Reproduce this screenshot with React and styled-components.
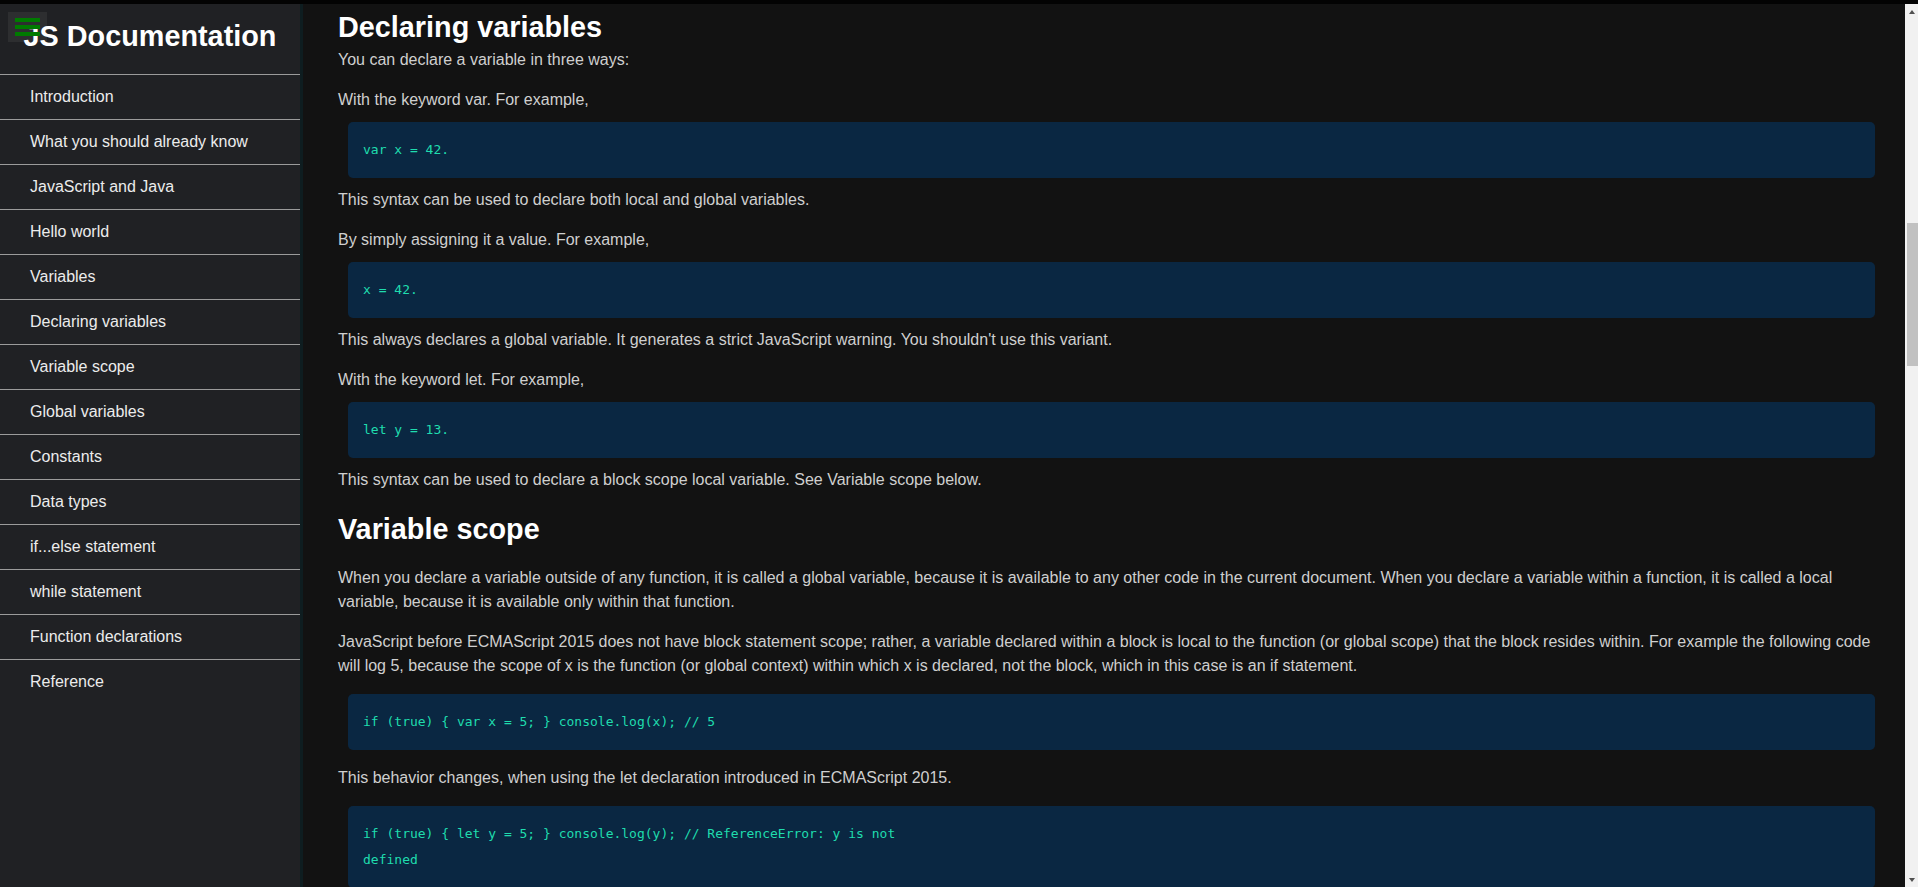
import React, { useLayoutEffect, useRef, useState } from "react"
import styled, { createGlobalStyle } from "styled-components"

const GlobalStyle = createGlobalStyle`
  html, body {
    margin: 0;
    height: 100%;
    overflow: hidden;
  }
  body {
    background: #121212;
    font-family: "Liberation Sans", Arial, sans-serif;
  }
  * {
    box-sizing: border-box;
  }
`

const Page = styled.div`
  display: flex;
  height: 100vh;
  border-top: 4px solid #030303;
`

const NavBar = styled.nav`
  flex: 0 0 303px;
  height: 100%;
  background: #202124;
  border-right: 3px solid #0e1d20;
  overflow: hidden;
`

const NavTitle = styled.header`
  margin: 0;
  padding: 16px 0 22px;
  font-size: 28.8px;
  line-height: 32px;
  font-weight: bold;
  text-align: center;
  color: #ffffff;
`

const NavList = styled.ul`
  list-style: none;
  margin: 0;
  padding: 0;
`

const NavLink = styled.a`
  display: block;
  padding: 10px 30px;
  font-size: 16px;
  line-height: 24px;
  color: #ececec;
  text-decoration: none;
  border-top: 1px solid #9b9b9b;
`

const MenuToggle = styled.button`
  position: fixed;
  top: 12px;
  left: 8px;
  z-index: 10;
  width: 39px;
  height: 30px;
  padding: 6px 7px;
  border: none;
  background: rgba(255, 255, 255, 0.06);
  display: flex;
  flex-direction: column;
  gap: 3.5px;
  cursor: pointer;
`

const Bar = styled.span`
  display: block;
  width: 25px;
  height: 3.5px;
  background: #007a00;
`

const Main = styled.main`
  flex: 1;
  height: 100%;
  overflow-y: scroll;
  background: #121212;
  scrollbar-width: none;

  &::-webkit-scrollbar {
    display: none;
  }
`

const Rail = styled.div`
  flex: 0 0 13px;
  height: 100%;
  display: flex;
  flex-direction: column;
  background: #f1f1f1;
`

const RailButton = styled.div`
  flex: 0 0 15px;
  display: flex;
  align-items: center;
  justify-content: center;

  &::before {
    content: "";
    width: 0;
    height: 0;
    border-left: 3.5px solid transparent;
    border-right: 3.5px solid transparent;
    ${(p) => (p.$down ? "border-top" : "border-bottom")}: 4px solid #505050;
  }
`

const RailTrack = styled.div`
  flex: 1;
  display: flex;
  flex-direction: column;
  align-items: flex-end;
`

const RailThumb = styled.div`
  width: 11px;
  background: #c1c1c1;
`

const Doc = styled.div`
  padding: 45px 20px 85px 35px;
  color: #cfcfcf;
  font-size: 16px;
  line-height: 24px;
`

const Section = styled.section`
  & + & {
    margin-top: 21px;
  }
`

const SectionTitle = styled.header`
  margin: 0 0 ${(p) => (p.$after ?? 21)}px;
  font-size: 28.8px;
  line-height: 32px;
  font-weight: bold;
  color: #ffffff;
`

const Para = styled.p`
  margin: 0;

  & + & {
    margin-top: 16px;
  }
`

const Code = styled.code`
  display: block;
  white-space: pre-line;
  margin: ${(p) => (p.$gap ?? 16)}px 10px;
  padding: 15px;
  border-radius: 5px;
  background: #0a2742;
  color: #1fdcae;
  font-family: "DejaVu Sans Mono", "Liberation Mono", monospace;
  font-size: 13px;
  line-height: 2;
`

const List = styled.ul`
  margin: ${(p) => (p.$nested ? 0 : 16)}px 0;
  padding-left: 40px;
`

const navItems = [
  "Introduction",
  "What you should already know",
  "JavaScript and Java",
  "Hello world",
  "Variables",
  "Declaring variables",
  "Variable scope",
  "Global variables",
  "Constants",
  "Data types",
  "if...else statement",
  "while statement",
  "Function declarations",
  "Reference",
]

const App = () => {
  const mainRef = useRef(null)
  const anchorRef = useRef(null)
  const trackRef = useRef(null)
  const [thumb, setThumb] = useState({ top: 0, height: 0 })

  useLayoutEffect(() => {
    const main = mainRef.current
    const target = anchorRef.current
    main.scrollTop += target.getBoundingClientRect().top - 11

    // the page is photographed scrolled, so the rail shows where we are
    const track = trackRef.current.clientHeight
    const ratio = main.clientHeight / main.scrollHeight
    const height = Math.max(20, track * ratio)
    const top = ((track - height) * main.scrollTop) / (main.scrollHeight - main.clientHeight)
    setThumb({ top, height })
  }, [])

  return (
    <>
      <GlobalStyle />
      <MenuToggle aria-label="menu">
        <Bar />
        <Bar />
        <Bar />
      </MenuToggle>
      <Page>
        <NavBar>
          <NavTitle>JS Documentation</NavTitle>
          <NavList>
            {navItems.map((item) => (
              <li key={item}>
                <NavLink href={"#" + item.replace(/ /g, "_")}>{item}</NavLink>
              </li>
            ))}
          </NavList>
        </NavBar>

        <Main ref={mainRef}>
          <Doc>
            <Section id="Introduction">
              <SectionTitle>Introduction</SectionTitle>
              <Para>
                JavaScript is a cross-platform, object-oriented scripting language. It is a small and lightweight
                language. Inside a host environment (for example, a web browser), JavaScript can be connected to the
                objects of its environment to provide programmatic control over them.
              </Para>
              <Para>
                JavaScript contains a standard library of objects, such as Array, Date, and Math, and a core set of
                language elements such as operators, control structures, and statements. Core JavaScript can be extended
                for a variety of purposes by supplementing it with additional objects; for example:
              </Para>
              <List>
                <li>
                  Client-side JavaScript extends the core language by supplying objects to control a browser and its
                  Document Object Model (DOM). For example, client-side extensions allow an application to place elements
                  on an HTML form and respond to user events such as mouse clicks, form input, and page navigation.
                </li>
                <li>
                  Server-side JavaScript extends the core language by supplying objects relevant to running JavaScript on
                  a server. For example, server-side extensions allow an application to communicate with a database,
                  provide continuity of information from one invocation to another of the application, or perform file
                  manipulations on a server.
                </li>
              </List>
            </Section>

            <Section id="What_you_should_already_know">
              <SectionTitle>What you should already know</SectionTitle>
              <Para>This guide assumes you have the following basic background:</Para>
              <List>
                <li>A general understanding of the Internet and the World Wide Web (WWW).</li>
                <li>Good working knowledge of HyperText Markup Language (HTML).</li>
                <li>
                  Some programming experience. If you are new to programming, try one of the tutorials linked on the main
                  page about JavaScript.
                </li>
              </List>
            </Section>

            <Section id="JavaScript_and_Java">
              <SectionTitle>JavaScript and Java</SectionTitle>
              <Para>
                JavaScript and Java are similar in some ways but fundamentally different in some others. The JavaScript
                language resembles Java but does not have Java's static typing and strong type checking. JavaScript
                follows most Java expression syntax, naming conventions and basic control-flow constructs which was the
                reason why it was renamed from LiveScript to JavaScript.
              </Para>
              <Para>
                In contrast to Java's compile-time system of classes built by declarations, JavaScript supports a runtime
                system based on a small number of data types representing numeric, Boolean, and string values.
                JavaScript has a prototype-based object model instead of the more common class-based object model. The
                prototype-based model provides dynamic inheritance; that is, what is inherited can vary for individual
                objects. JavaScript also supports functions without any special declarative requirements. Functions can
                be properties of objects, executing as loosely typed methods.
              </Para>
              <Para>
                JavaScript is a very free-form language compared to Java. You do not have to declare all variables,
                classes, and methods. You do not have to be concerned with whether methods are public, private, or
                protected, and you do not have to implement interfaces. Variables, parameters, and function return types
                are not explicitly typed.
              </Para>
            </Section>

            <Section id="Hello_world">
              <SectionTitle>Hello world</SectionTitle>
              <Para>
                To get started with writing JavaScript, open the Scratchpad and write your first "Hello world"
                JavaScript code:
              </Para>
              <Code>{`function greetMe(yourName) { alert("Hello " + yourName); }\ngreetMe("World");`}</Code>
              <Para>Select the code in the pad and hit Ctrl+R to watch it unfold in your browser!</Para>
            </Section>

            <Section id="Variables">
              <SectionTitle>Variables</SectionTitle>
              <Para>
                You use variables as symbolic names for values in your application. The names of variables, called
                identifiers, conform to certain rules.
              </Para>
              <Para>
                A JavaScript identifier must start with a letter, underscore (_), or dollar sign ($); subsequent
                characters can also be digits (0-9). Because JavaScript is case sensitive, letters include the characters
                "A" through "Z" (uppercase) and the characters "a" through "z" (lowercase).
              </Para>
              <Para>
                You can use ISO 8859-1 or Unicode letters such as å and ü in identifiers. You can also use the Unicode
                escape sequences as characters in identifiers. Some examples of legal names are Number_hits, temp99, and
                _name.
              </Para>
            </Section>

            <Section id="Declaring_variables">
              <SectionTitle ref={anchorRef} $after={5}>
                Declaring variables
              </SectionTitle>
              <Para>You can declare a variable in three ways:</Para>
              <Para>With the keyword var. For example,</Para>
              <Code $gap={10}>var x = 42.</Code>
              <Para>This syntax can be used to declare both local and global variables.</Para>
              <Para>By simply assigning it a value. For example,</Para>
              <Code $gap={10}>x = 42.</Code>
              <Para>This always declares a global variable. It generates a strict JavaScript warning. You shouldn't use this variant.</Para>
              <Para>With the keyword let. For example,</Para>
              <Code $gap={10}>let y = 13.</Code>
              <Para>This syntax can be used to declare a block scope local variable. See Variable scope below.</Para>
            </Section>

            <Section id="Variable_scope">
              <SectionTitle>Variable scope</SectionTitle>
              <Para>
                When you declare a variable outside of any function, it is called a global variable, because it is
                available to any other code in the current document. When you declare a variable within a function, it
                is called a local variable, because it is available only within that function.
              </Para>
              <Para>
                JavaScript before ECMAScript 2015 does not have block statement scope; rather, a variable declared within
                a block is local to the function (or global scope) that the block resides within. For example the
                following code will log 5, because the scope of x is the function (or global context) within which x is
                declared, not the block, which in this case is an if statement.
              </Para>
              <Code>{`if (true) { var x = 5; } console.log(x); // 5`}</Code>
              <Para>This behavior changes, when using the let declaration introduced in ECMAScript 2015.</Para>
              <Code>{`if (true) { let y = 5; } console.log(y); // ReferenceError: y is not\ndefined`}</Code>
            </Section>

            <Section id="Global_variables">
              <SectionTitle>Global variables</SectionTitle>
              <Para>
                Global variables are in fact properties of the global object. In web pages the global object is window,
                so you can set and access global variables using the window.variable syntax.
              </Para>
              <Para>
                Consequently, you can access global variables declared in one window or frame from another window or
                frame by specifying the window or frame name. For example, if a variable called phoneNumber is declared
                in a document, you can refer to this variable from an iframe as parent.phoneNumber.
              </Para>
            </Section>

            <Section id="Constants">
              <SectionTitle>Constants</SectionTitle>
              <Para>
                You can create a read-only, named constant with the const keyword. The syntax of a constant identifier is
                the same as for a variable identifier: it must start with a letter, underscore or dollar sign and can
                contain alphabetic, numeric, or underscore characters.
              </Para>
              <Code>const PI = 3.14;</Code>
              <Para>
                A constant cannot change value through assignment or be re-declared while the script is running. It has
                to be initialized to a value.
              </Para>
              <Para>
                The scope rules for constants are the same as those for let block scope variables. If the const keyword
                is omitted, the identifier is assumed to represent a variable.
              </Para>
              <Para>
                You cannot declare a constant with the same name as a function or variable in the same scope. For
                example:
              </Para>
              <Code>{`function f() {};\nconst f = 5; // THIS WILL CAUSE AN ERROR`}</Code>
              <Para>However, object attributes are not protected, so the following statement is executed without problems.</Para>
              <Code>{`const MY_OBJECT = {"key": "value"};\nMY_OBJECT.key = "otherValue";`}</Code>
            </Section>

            <Section id="Data_types">
              <SectionTitle>Data types</SectionTitle>
              <Para>The latest ECMAScript standard defines seven data types:</Para>
              <List>
                <li>
                  Six data types that are primitives:
                  <List $nested>
                    <li>Boolean. true and false.</li>
                    <li>
                      null. A special keyword denoting a null value. Because JavaScript is case-sensitive, null is not
                      the same as Null, NULL, or any other variant.
                    </li>
                    <li>undefined. A top-level property whose value is undefined.</li>
                    <li>Number. 42 or 3.14159.</li>
                    <li>String. "Howdy"</li>
                    <li>Symbol (new in ECMAScript 2015). A data type whose instances are unique and immutable.</li>
                  </List>
                </li>
                <li>and Object</li>
              </List>
              <Para>
                Although these data types are a relatively small amount, they enable you to perform useful functions
                with your applications. Objects and functions are the other fundamental elements in the language. You can
                think of objects as named containers for values, and functions as procedures that your application can
                perform.
              </Para>
            </Section>

            <Section id="if...else_statement">
              <SectionTitle>if...else statement</SectionTitle>
              <Para>
                Use the if statement to execute a statement if a logical condition is true. Use the optional else clause
                to execute a statement if the condition is false. An if statement looks as follows:
              </Para>
              <Code>{`if (condition) {\nstatement_1;\n} else {\nstatement_2;\n}`}</Code>
              <Para>
                condition can be any expression that evaluates to true or false. See Boolean for an explanation of what
                evaluates to true and false. If condition evaluates to true, statement_1 is executed; otherwise,
                statement_2 is executed. statement_1 and statement_2 can be any statement, including further nested if
                statements.
              </Para>
              <Para>You may also compound the statements using else if to have multiple conditions tested in sequence, as follows:</Para>
              <Code>{`if (condition_1) {\nstatement_1;\n} else if (condition_2) {\nstatement_2;\n} else if (condition_n) {\nstatement_n;\n} else {\nstatement_last;\n}`}</Code>
            </Section>

            <Section id="while_statement">
              <SectionTitle>while statement</SectionTitle>
              <Para>
                A while statement executes its statements as long as a specified condition evaluates to true. A while
                statement looks as follows:
              </Para>
              <Code>{`while (condition)\nstatement`}</Code>
              <Para>
                If the condition becomes false, statement within the loop stops executing and control passes to the
                statement following the loop.
              </Para>
              <Para>
                The condition test occurs before statement in the loop is executed. If the condition returns true,
                statement is executed and the condition is tested again. If the condition returns false, execution stops
                and control is passed to the statement following while.
              </Para>
              <Para>The following while loop iterates as long as n is less than three:</Para>
              <Code>{`var n = 0;\nvar x = 0;\nwhile (n < 3) {\nn++;\nx += n;\n}`}</Code>
              <Para>
                With each iteration, the loop increments n and adds that value to x. Therefore, x and n take on the
                following values:
              </Para>
              <List>
                <li>After the first pass: n = 1 and x = 1</li>
                <li>After the second pass: n = 2 and x = 3</li>
                <li>After the third pass: n = 3 and x = 6</li>
              </List>
              <Para>After completing the third pass, the condition n &lt; 3 is no longer true, so the loop terminates.</Para>
            </Section>

            <Section id="Function_declarations">
              <SectionTitle>Function declarations</SectionTitle>
              <Para>
                A function definition (also called a function declaration, or function statement) consists of the
                function keyword, followed by:
              </Para>
              <List>
                <li>The name of the function.</li>
                <li>A list of arguments to the function, enclosed in parentheses and separated by commas.</li>
                <li>The JavaScript statements that define the function, enclosed in curly brackets, {"{ }"}.</li>
              </List>
              <Para>For example, the following code defines a simple function named square:</Para>
              <Code>{`function square(number) {\nreturn number * number;\n}`}</Code>
              <Para>
                The function square takes one argument, called number. The function consists of one statement that says
                to return the argument of the function (that is, number) multiplied by itself. The return statement
                specifies the value returned by the function.
              </Para>
              <Para>
                Primitive parameters (such as a number) are passed to functions by value; the value is passed to the
                function, but if the function changes the value of the parameter, this change is not reflected globally
                or in the calling function.
              </Para>
            </Section>

            <Section id="Reference">
              <SectionTitle>Reference</SectionTitle>
              <List>
                <li>All the documentation in this page is taken from MDN</li>
              </List>
            </Section>
          </Doc>
        </Main>

        <Rail aria-hidden="true">
          <RailButton />
          <RailTrack ref={trackRef}>
            <RailThumb style={{ marginTop: thumb.top, height: thumb.height }} />
          </RailTrack>
          <RailButton $down />
        </Rail>
      </Page>
    </>
  )
}

export default App
